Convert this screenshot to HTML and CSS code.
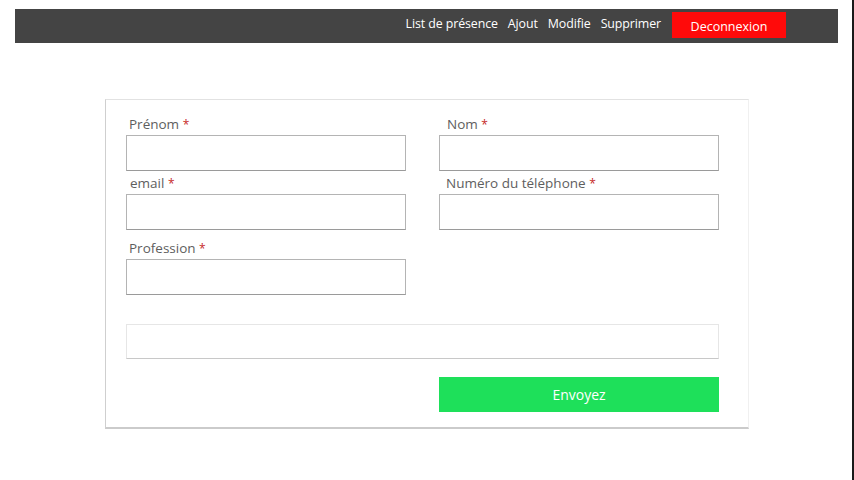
FILE: index.html
```html
<!DOCTYPE html>
<html lang="fr">
<head>
<meta charset="utf-8">
<link rel="stylesheet" href="styles.css">
<title>Formulaire</title>
</head>
<body>
<nav class="topbar">
  <a class="nav-link" href="#">List de présence</a>
  <a class="nav-link" href="#">Ajout</a>
  <a class="nav-link" href="#">Modifie</a>
  <a class="nav-link" href="#">Supprimer</a>
  <a class="logout" href="#">Deconnexion</a>
</nav>
<form class="card">
  <div class="grid">
    <div class="field">
      <label class="label label-left">Prénom <span class="req">*</span></label>
      <input class="input" type="text">
    </div>
    <div class="field">
      <label class="label label-right">Nom <span class="req">*</span></label>
      <input class="input" type="text">
    </div>
    <div class="field field-2">
      <label class="label label-left email">email <span class="req">*</span></label>
      <input class="input" type="text">
    </div>
    <div class="field field-2">
      <label class="label label-right num">Numéro du téléphone <span class="req">*</span></label>
      <input class="input" type="text">
    </div>
    <div class="field field-3">
      <label class="label label-left">Profession <span class="req">*</span></label>
      <input class="input" type="text">
    </div>
  </div>
  <input class="input wide" type="text">
  <div class="actions">
    <button class="submit" type="button">Envoyez</button>
  </div>
</form>
</body>
</html>
```
FILE: styles.css
```css
html {
  box-sizing: border-box;
  min-height: 100%;
  height: 100%;
  border-right: 2px solid #1a1a1a;
  background: #fff;
}
*, *::before, *::after { box-sizing: inherit; }
body {
  margin: 0;
  font-family: "Open Sans", "Noto Sans", sans-serif;
}
.topbar {
  margin: 9px 14px 0 15px;
  height: 34px;
  background: #444444;
  display: flex;
  justify-content: flex-end;
  align-items: flex-start;
  padding: 3px 52px 0 0;
  gap: 10px;
}
.nav-link {
  color: #fff;
  text-decoration: none;
  font-size: 12.4px;
  line-height: 23px;
  letter-spacing: -0.1px;
}
.logout {
  margin-left: 1px;
  width: 114px;
  height: 26px;
  background: #ff0a0a;
  color: #fff;
  text-decoration: none;
  font-size: 12.5px;
  display: flex;
  align-items: center;
  justify-content: center;
  padding-top: 2px;
}
.card {
  margin: 56px 0 0 105px;
  width: 644px;
  border-top: 1px solid #e2e2e2;
  border-left: 1px solid #cfcfcf;
  border-right: 1px solid #f0f0f0;
  border-bottom: 2px solid #cbcbcb;
  padding: 14px 29px 15px 20px;
  background: #fff;
}
.grid {
  display: grid;
  grid-template-columns: 280px 280px;
  column-gap: 33px;
  row-gap: 2px;
}
.field { display: flex; flex-direction: column; }
.field-3 { margin-top: 6px; }
.label {
  font-size: 13.5px;
  line-height: 20px;
  color: #5e5e5e;
}
.label-left { padding-left: 3px; }
.label-right { padding-left: 8px; }
.email { padding-left: 4px; }
.num { padding-left: 7px; }
.req { color: #c62828; font-size: 12px; }
.input {
  display: block;
  width: 280px;
  height: 36px;
  margin: 0;
  border: 1px solid #b4b4b4;
  border-bottom-color: #9a9a9a;
  background: #fff;
  font: inherit;
}
.wide {
  width: 593px;
  height: 35px;
  margin-top: 29px;
  border: 1px solid #e6e6e6;
  border-bottom-color: #c8c8c8;
}
.actions {
  display: flex;
  justify-content: flex-end;
  margin-top: 18px;
}
.submit {
  width: 280px;
  height: 35px;
  border: none;
  background: #1ee05a;
  color: #fff;
  font-family: inherit;
  font-size: 14px;
  padding: 0;
}
```
